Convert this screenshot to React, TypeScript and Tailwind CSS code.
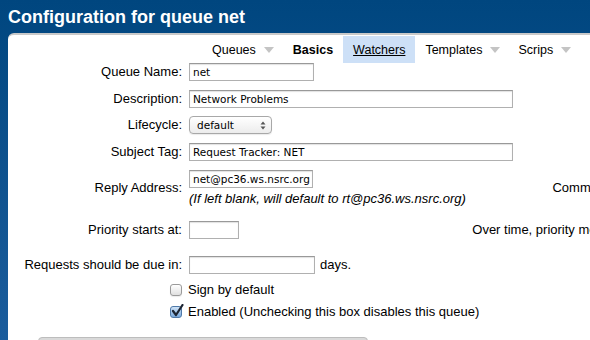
import React from "react";

const sans = { fontFamily: '"Liberation Sans", Arial, sans-serif' };
const inputFont = { fontFamily: '"DejaVu Sans", Verdana, sans-serif' };

function Arrow() {
  return <span className="inline-block w-0 h-0 border-l-[5px] border-r-[5px] border-t-[6px] border-l-transparent border-r-transparent border-t-[#c4c4c4] mt-[1px]" />;
}

function TextInput({ value, w }: { value?: string; w: string }) {
  return (
    <div
      className={`${w} h-[18px] border border-[#b0b0b0] border-t-[#999] bg-white shadow-[inset_0_1px_1px_rgba(0,0,0,0.12)] px-[3px] flex items-center text-[10.5px] text-black whitespace-nowrap overflow-hidden`}
      style={inputFont}
    >
      {value}
    </div>
  );
}

function Checkbox({ checked }: { checked?: boolean }) {
  if (!checked)
    return (
      <div className="w-[12px] h-[12px] rounded-[3px] border border-[#9a9a9a] bg-gradient-to-b from-white to-[#e0e0e0] shadow-[0_1px_1px_rgba(0,0,0,0.08)]" />
    );
  return (
    <div className="relative w-[12px] h-[12px]">
      <div className="w-[12px] h-[12px] rounded-[3px] border border-[#4f79a8] bg-gradient-to-b from-[#cfe3f7] to-[#79a9dc]" />
      <svg className="absolute -top-[2px] left-[1px]" width="13" height="13" viewBox="0 0 13 13">
        <path d="M2 7 L5 11 L11.5 1" fill="none" stroke="#1c2533" strokeWidth="2.2" strokeLinejoin="round" strokeLinecap="round" />
      </svg>
    </div>
  );
}

function Row({
  label,
  children,
  extra,
  className = "",
  sideClass = "",
}: {
  label?: React.ReactNode;
  children?: React.ReactNode;
  extra?: string;
  className?: string;
  sideClass?: string;
}) {
  return (
    <div className={`grid grid-cols-[174px_276px_191px] gap-x-[7px] ${className}`}>
      <div className={`flex items-center justify-end whitespace-nowrap ${sideClass}`}>{label}</div>
      <div className="flex flex-col justify-center">{children}</div>
      <div className={`flex items-center justify-end whitespace-nowrap ${sideClass}`}>{extra}</div>
    </div>
  );
}

export default function App() {
  return (
    <div
      className="w-[590px] h-[340px] overflow-hidden bg-gradient-to-b from-[#00467f] to-[#1b5d9d] text-[13px] leading-[16px] text-black"
      style={sans}
    >
      <div className="h-[33px] pl-[8px] pt-[6px] text-[18px] leading-[22px] font-bold text-white whitespace-nowrap">
        Configuration for queue net
      </div>
      <div className="ml-[8px] w-[700px] h-[320px] bg-white rounded-tl-[6px] border-t-[2px] border-[#c9c9c9] pt-[1px]">
        <div className="flex h-[27px] pl-[194px] whitespace-nowrap text-[12.5px]">
          <div className="flex items-center gap-[8px] pl-[10px] pr-[9px]">
            <span>Queues</span>
            <Arrow />
          </div>
          <div className="flex items-center px-[10px] font-bold">Basics</div>
          <div className="flex items-center px-[10px] bg-[#cde0f7] underline">Watchers</div>
          <div className="flex items-center gap-[8px] px-[10px]">
            <span>Templates</span>
            <Arrow />
          </div>
          <div className="flex items-center gap-[8px] px-[8px]">
            <span>Scrips</span>
            <Arrow />
          </div>
        </div>

        <Row label="Queue Name:">
          <TextInput value="net" w="w-[125px]" />
        </Row>
        <Row label="Description:" className="mt-[9px]">
          <TextInput value="Network Problems" w="w-[324px]" />
        </Row>
        <Row label="Lifecycle:" className="mt-[8px]">
          <div
            className="w-[83px] h-[18px] rounded-[4px] border border-[#a8a8a8] bg-gradient-to-b from-white to-[#ececec] flex items-center justify-between pl-[7px] pr-[5px] text-[10.5px] shadow-[0_1px_1px_rgba(0,0,0,0.08)]"
            style={inputFont}
          >
            <span>default</span>
            <svg width="6" height="9" viewBox="0 0 6 9">
              <path d="M0.5 3.5 L3 0.5 L5.5 3.5 Z" fill="#555" />
              <path d="M0.5 5.5 L3 8.5 L5.5 5.5 Z" fill="#555" />
            </svg>
          </div>
        </Row>
        <Row label="Subject Tag:" className="mt-[9px]">
          <TextInput value="Request Tracker: NET" w="w-[324px]" />
        </Row>
        <Row
          label="Reply Address:"
          extra="Comment Address:"
          className="mt-[9px]"
          sideClass="pb-[3px]"
        >
          <TextInput value="net@pc36.ws.nsrc.org" w="w-[124px]" />
          <div className="italic leading-[18px] mt-[2px] whitespace-nowrap">
            (If left blank, will default to rt@pc36.ws.nsrc.org)
          </div>
        </Row>
        <Row label="Priority starts at:" extra="Over time, priority moves toward:" className="mt-[13px]">
          <TextInput w="w-[50px]" />
        </Row>
        <Row label="Requests should be due in:" className="mt-[17px]">
          <div className="flex items-center gap-[5px]">
            <TextInput w="w-[126px]" />
            <span>days.</span>
          </div>
        </Row>
        <Row label={<Checkbox />} className="mt-[8px] h-[16px]">
          <div className="-ml-[1px]">Sign by default</div>
        </Row>
        <Row label={<Checkbox checked />} className="mt-[6px] h-[16px]">
          <div className="-ml-[1px] whitespace-nowrap">Enabled (Unchecking this box disables this queue)</div>
        </Row>
        <div className="ml-[30px] mt-[17px] w-[330px] h-[10px] rounded-t-[4px] border border-[#bdbdbd] bg-[#d9d9d9]" />
      </div>
    </div>
  );
}
